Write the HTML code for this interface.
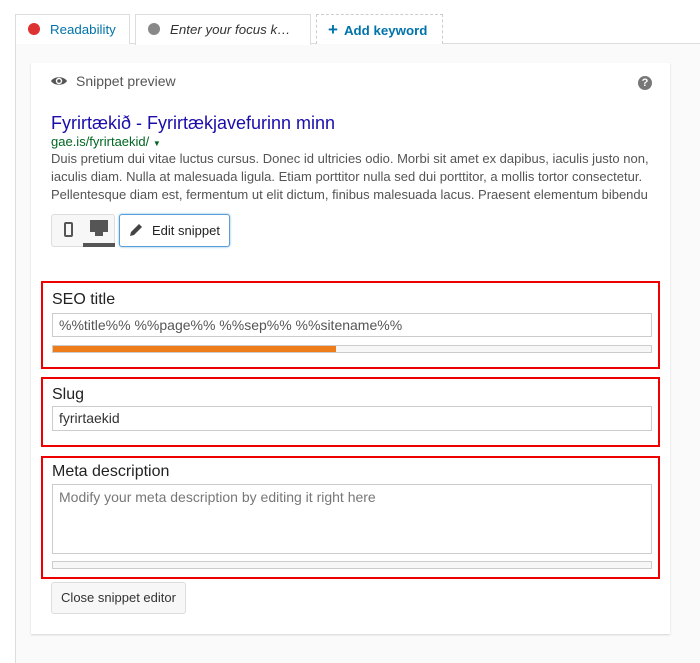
<!DOCTYPE html><html><head><style>
*{box-sizing:border-box;margin:0;padding:0}
body{width:700px;height:652px;background:#fff;font-family:"Liberation Sans",sans-serif;position:relative;overflow:hidden;color:#333}
.a{position:absolute}
.tab{position:absolute;top:14px;height:30px;border:1px solid #ddd;border-bottom:none;background:#fff;font-size:13.3px;line-height:29px}
.dot{display:inline-block;width:12px;height:12px;border-radius:50%;vertical-align:-1px;margin-right:10px}
.red{border:2px solid #e00;position:absolute;left:41px;width:619px}
.lab{position:absolute;left:9px;font-size:16px;color:#222}
.inp{position:absolute;left:9px;width:600px;border:1px solid #ccc;background:#fff;font-size:14px;color:#555;padding-left:6px}
</style></head><body>
<div class="a" style="left:15px;top:43px;width:700px;height:620px;background:#fafafa;border-left:1px solid #ddd;border-top:1px solid #ddd"></div>
<div class="tab" style="left:15px;width:115px;padding-left:12px;color:#0073aa"><span class="dot" style="background:#dc3232"></span>Readability</div>
<div class="tab" style="left:135px;width:176px;padding-left:12px;height:31px;color:#333;font-style:italic"><span class="dot" style="background:#888"></span>Enter your focus k…</div>
<div class="tab" style="left:316px;width:127px;border:1px dashed #ccc;border-bottom:none;padding-left:11px;color:#0073aa;font-weight:bold"><span style="font-size:17px;margin-right:6px">+</span>Add keyword</div>
<div class="a" style="left:31px;top:63px;width:639px;height:571px;background:#fff;box-shadow:0 1px 2px rgba(0,0,0,.15)"></div>
<svg class="a" style="left:50px;top:75px" width="18" height="12" viewBox="0 0 18 12"><path d="M1 6C4 1 14 1 17 6C14 11 4 11 1 6Z" fill="#555"/><circle cx="9" cy="6" r="3.2" fill="#fff"/><circle cx="9" cy="6" r="1.8" fill="#555"/></svg>
<div class="a" style="left:76px;top:73px;font-size:14px;color:#555">Snippet preview</div>
<div class="a" style="left:638px;top:76px;width:14px;height:14px;border-radius:50%;background:#777;color:#fff;font-size:11px;font-weight:bold;text-align:center;line-height:14px">?</div>
<div class="a" style="left:51px;top:113px;font-size:18px;color:#1a0dab">Fyrirtækið - Fyrirtækjavefurinn minn</div>
<div class="a" style="left:51px;top:134px;font-size:13px;color:#006621">gae.is/fyrirtaekid/ <span style="font-size:8px">▼</span></div>
<div class="a" style="left:51px;top:150px;white-space:nowrap;font-size:13px;line-height:18px;color:#545454">Duis pretium dui vitae luctus cursus. Donec id ultricies odio. Morbi sit amet ex dapibus, iaculis justo non,<br>iaculis diam. Nulla at malesuada ligula. Etiam porttitor nulla sed dui porttitor, a mollis tortor consectetur.<br>Pellentesque diam est, fermentum ut elit dictum, finibus malesuada lacus. Praesent elementum bibendu</div>
<div class="a" style="left:51px;top:214px;width:64px;height:33px;border:1px solid #ddd;border-radius:3px;background:#f7f7f7"></div>
<div class="a" style="left:64px;top:222px;width:9px;height:15px;border:2px solid #555;border-radius:2px"></div>
<div class="a" style="left:90px;top:220px;width:18px;height:12px;background:#555"></div>
<div class="a" style="left:95px;top:232px;width:8px;height:4px;background:#555"></div>
<div class="a" style="left:83px;top:243px;width:32px;height:4px;background:#555"></div>
<div class="a" style="left:119px;top:214px;width:111px;height:33px;border:1px solid #5b9dd9;border-radius:3px;background:#fff;box-shadow:0 0 2px rgba(30,140,190,.6);font-size:13px;line-height:31px;padding-left:32px;color:#222">Edit snippet</div>
<svg class="a" style="left:129px;top:223px" width="14" height="14" viewBox="0 0 14 14"><path d="M1 13L2 9L10 1L13 4L5 12Z" fill="#444"/></svg>
<div class="red" style="top:281px;height:88px"><div class="lab" style="top:8px">SEO title</div><div class="inp" style="top:30px;height:24px;line-height:22px">%%title%% %%page%% %%sep%% %%sitename%%</div><div class="a" style="left:9px;top:62px;width:600px;height:8px;border:1px solid #ccc;background:#f7f7f7"><div style="width:283px;height:6px;background:#ee7c1b"></div></div></div>
<div class="red" style="top:377px;height:70px"><div class="lab" style="top:7px">Slug</div><div class="inp" style="top:27px;height:25px;line-height:23px;color:#333">fyrirtaekid</div></div>
<div class="red" style="top:456px;height:123px"><div class="lab" style="top:5px">Meta description</div><div class="inp" style="top:26px;height:70px;padding-top:4px;color:#777">Modify your meta description by editing it right here</div><div class="a" style="left:9px;top:103px;width:600px;height:8px;border:1px solid #ccc;background:#f7f7f7"></div></div>
<div class="a" style="left:51px;top:582px;width:135px;height:32px;border:1px solid #ddd;border-radius:3px;background:#f7f7f7;font-size:13px;line-height:30px;text-align:center;color:#333">Close snippet editor</div>
</body></html>
